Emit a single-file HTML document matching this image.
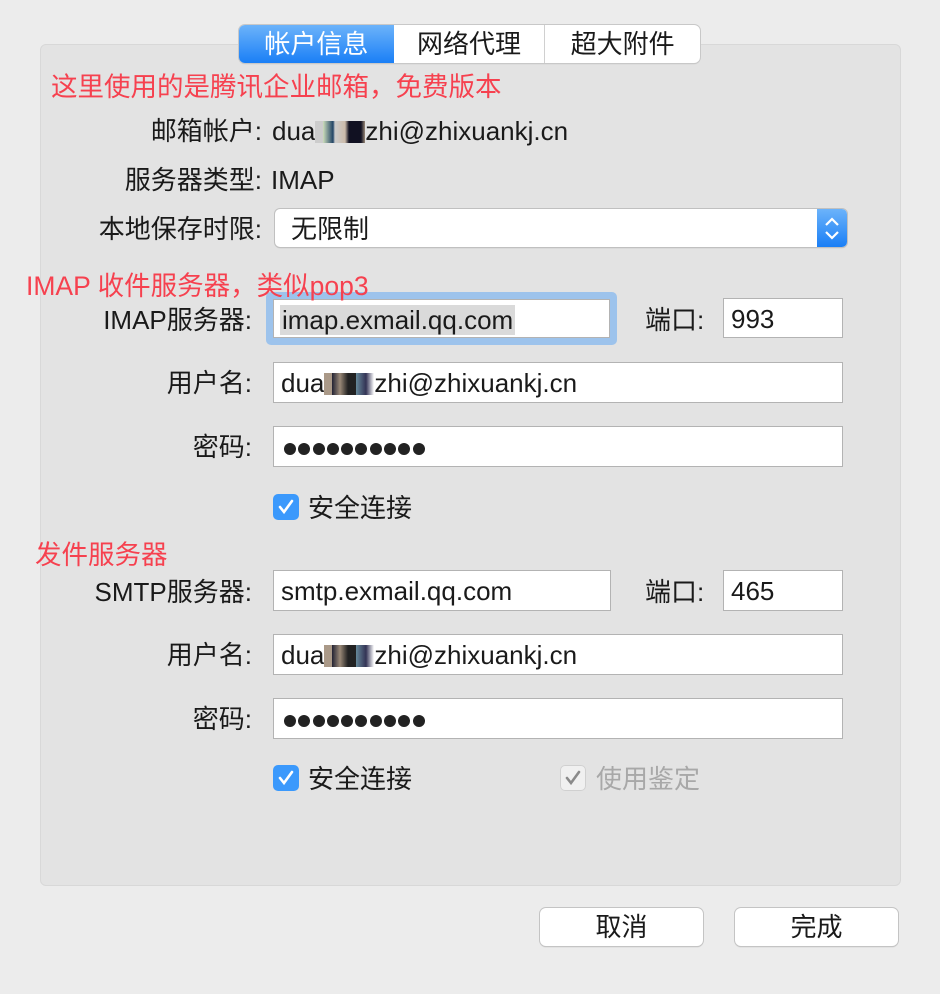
<!DOCTYPE html>
<html><head><meta charset="utf-8"><style>
body{margin:0;width:940px;height:994px;background:#ececec;font-family:"Liberation Sans","Noto Sans CJK SC",sans-serif;position:relative;overflow:hidden;color:#1a1a1a}
.a{position:absolute;white-space:nowrap}
.panel{left:40px;top:44px;width:859px;height:840px;background:#e3e3e3;border:1px solid #d8d8d8;border-radius:6px}
.red{color:#f6414f;font-size:26.5px;line-height:32px;z-index:5}
.lbl{font-size:26px;text-align:right;line-height:32px}
.fld{background:#fff;border:1px solid #b3b3b3;box-sizing:border-box;font-size:26px;line-height:40px;padding-left:7px}
.tabs{left:239px;top:25px;width:461px;height:38px;background:#fff;border-radius:6px;box-shadow:0 0 0 1px #c8c8c8,0 1px 1px #bbb;display:flex;font-size:26px;line-height:38px;overflow:hidden}
.tabs div{text-align:center}
.cb{width:26px;height:26px;border-radius:5px;background:#3b99fc;color:#fff}
.btn{background:#fff;border-radius:6px;box-shadow:0 0 0 1px #c4c4c4,0 1px 1px #aaa;font-size:26px;text-align:center;line-height:38px;height:38px}
.blur{display:inline-block;height:22px;vertical-align:-3px}
.dots{padding-left:10px}
.dots i{display:inline-block;width:12px;height:12px;border-radius:50%;background:#222;margin-right:2.3px;vertical-align:1px}
</style></head><body>
<div class="a panel"></div>
<div class="a tabs"><div style="width:155px;background:linear-gradient(#6cb3fa,#1a7ff6);color:#fff">帐户信息</div><div style="width:151px;border-right:1px solid #d0d0d0">网络代理</div><div style="width:155px">超大附件</div></div>

<div class="a red" style="left:51px;top:71px">这里使用的是腾讯企业邮箱，免费版本</div>
<div class="a lbl" style="right:678px;top:115px">邮箱帐户:</div>
<div class="a" style="left:272px;top:115px;font-size:26px;line-height:32px">dua<span class="blur" style="width:50px;background:linear-gradient(90deg,#ccc 0,#ccc 8px,#cdb 8px,#246 18px,#ccc 20px,#cba 30px,#112 34px,#112 46px,#987 50px)"></span>zhi@zhixuankj.cn</div>
<div class="a lbl" style="right:678px;top:164px">服务器类型:</div>
<div class="a" style="left:271px;top:164px;font-size:26px;line-height:32px">IMAP</div>
<div class="a lbl" style="right:678px;top:213px">本地保存时限:</div>
<div class="a" style="left:275px;top:209px;width:572px;height:38px;background:#fff;border-radius:5px;box-shadow:0 0 0 1px #c0c0c0,0 1px 1px #aaa;font-size:26px;line-height:40px"><span style="padding-left:16px">无限制</span><div class="a" style="right:0;top:0;width:30px;height:38px;background:linear-gradient(#6cb3fa,#1a7ff6);border-radius:0 5px 5px 0"><svg width="30" height="38"><path d="M9 16l6-6 6 6M9 23l6 6 6-6" stroke="#fff" stroke-width="2.2" fill="none"/></svg></div></div>

<div class="a lbl" style="right:688px;top:304px">IMAP服务器:</div>
<div class="a" style="left:266px;top:292px;width:351px;height:53px;border-radius:5px;background:#9dc3ec"></div>
<div class="a fld" style="left:273px;top:299px;width:337px;height:39px;padding-left:6px"><span style="background:#dadada;padding:0 2px">imap.exmail.qq.com</span></div>
<div class="a red" style="left:26px;top:270px">IMAP 收件服务器，类似pop3</div>
<div class="a lbl" style="left:645px;top:304px">端口:</div>
<div class="a fld" style="left:723px;top:298px;width:120px;height:40px">993</div>

<div class="a lbl" style="right:688px;top:367px">用户名:</div>
<div class="a fld" style="left:273px;top:362px;width:570px;height:41px">dua<span class="blur" style="width:50px;background:linear-gradient(90deg,#a98 0,#a98 8px,#223 8px,#987 16px,#222 24px,#222 32px,#689 32px,#335 42px,#fff 50px)"></span>zhi@zhixuankj.cn</div>
<div class="a lbl" style="right:688px;top:431px">密码:</div>
<div class="a fld dots" style="left:273px;top:426px;width:570px;height:41px"><i></i><i></i><i></i><i></i><i></i><i></i><i></i><i></i><i></i><i></i></div>
<div class="a cb" style="left:273px;top:494px"><svg width="26" height="26"><path d="M7 13l4 5 8-11" stroke="#fff" stroke-width="2.6" fill="none" stroke-linecap="round"/></svg></div>
<div class="a" style="left:308px;top:492px;font-size:26px;line-height:32px">安全连接</div>

<div class="a red" style="left:35px;top:539px">发件服务器</div>
<div class="a lbl" style="right:688px;top:576px">SMTP服务器:</div>
<div class="a fld" style="left:273px;top:570px;width:338px;height:41px">smtp.exmail.qq.com</div>
<div class="a lbl" style="left:645px;top:576px">端口:</div>
<div class="a fld" style="left:723px;top:570px;width:120px;height:41px">465</div>
<div class="a lbl" style="right:688px;top:639px">用户名:</div>
<div class="a fld" style="left:273px;top:634px;width:570px;height:41px">dua<span class="blur" style="width:50px;background:linear-gradient(90deg,#a98 0,#a98 8px,#223 8px,#987 16px,#222 24px,#222 32px,#689 32px,#335 42px,#fff 50px)"></span>zhi@zhixuankj.cn</div>
<div class="a lbl" style="right:688px;top:703px">密码:</div>
<div class="a fld dots" style="left:273px;top:698px;width:570px;height:41px"><i></i><i></i><i></i><i></i><i></i><i></i><i></i><i></i><i></i><i></i></div>
<div class="a cb" style="left:273px;top:765px"><svg width="26" height="26"><path d="M7 13l4 5 8-11" stroke="#fff" stroke-width="2.6" fill="none" stroke-linecap="round"/></svg></div>
<div class="a" style="left:308px;top:763px;font-size:26px;line-height:32px">安全连接</div>
<div class="a cb" style="left:560px;top:765px;background:#f0f0f0;box-shadow:inset 0 0 0 1px #d0d0d0"><svg width="26" height="26"><path d="M7 13l4 5 8-11" stroke="#8a8a8a" stroke-width="2.6" fill="none" stroke-linecap="round"/></svg></div>
<div class="a" style="left:596px;top:763px;font-size:26px;line-height:32px;color:#a8a8a8">使用鉴定</div>

<div class="a btn" style="left:540px;top:908px;width:163px">取消</div>
<div class="a btn" style="left:735px;top:908px;width:163px">完成</div>
</body></html>
